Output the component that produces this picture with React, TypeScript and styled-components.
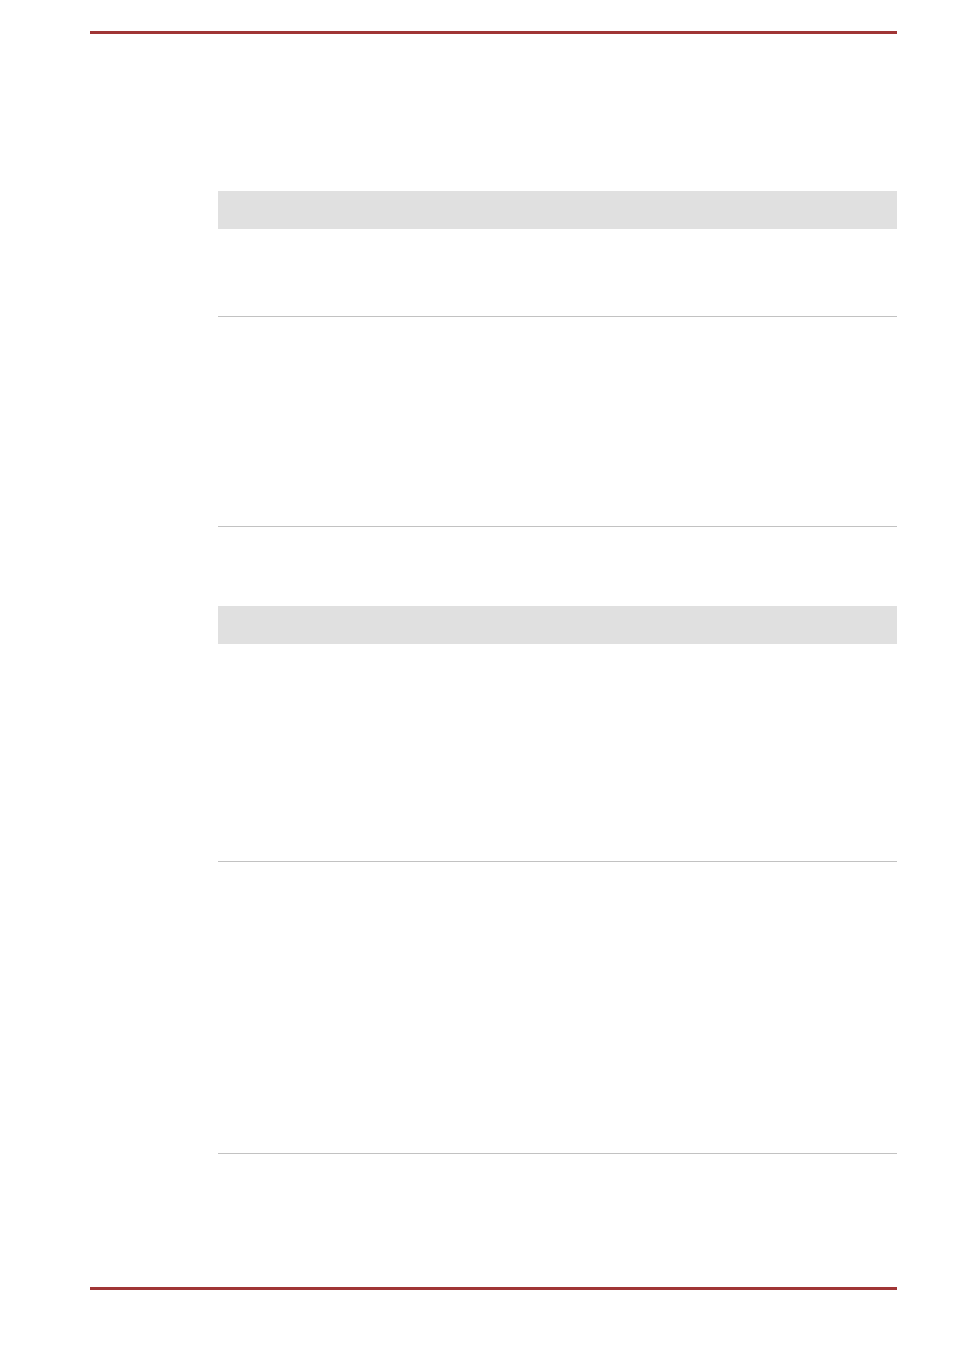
import React from 'react';
import styled, { createGlobalStyle } from 'styled-components';

const GlobalStyle = createGlobalStyle`
  html, body {
    margin: 0;
    padding: 0;
    background: #ffffff;
    font-family: "Liberation Sans", Arial, sans-serif;
  }
`;

const Page = styled.div`
  width: 955px;
  height: 1346px;
  box-sizing: border-box;
  padding: 31px 58px 0 90px;
  display: flex;
  flex-direction: column;
`;

const Rule = styled.div`
  height: 3px;
  background: #a03535;
  flex-shrink: 0;
`;

const Content = styled.div`
  display: flex;
  flex-direction: column;
  padding-left: 128px;
  height: 1253px;
  box-sizing: border-box;
  padding-top: 157px;
`;

const Table = styled.div<{ $gap?: number }>`
  display: flex;
  flex-direction: column;
  margin-top: ${p => p.$gap ?? 0}px;
`;

const HeaderBar = styled.div`
  height: 38px;
  background: #e0e0e0;
`;

const Row = styled.div<{ $h: number }>`
  height: ${p => p.$h}px;
  border-bottom: 1px solid #c2c2c2;
`;

export default function App() {
  return (
    <>
      <GlobalStyle />
      <Page>
        <Rule />
        <Content>
          <Table>
            <HeaderBar />
            <Row $h={87} />
            <Row $h={209} />
          </Table>
          <Table $gap={79}>
            <HeaderBar />
            <Row $h={217} />
            <Row $h={291} />
          </Table>
        </Content>
        <Rule />
      </Page>
    </>
  );
}
